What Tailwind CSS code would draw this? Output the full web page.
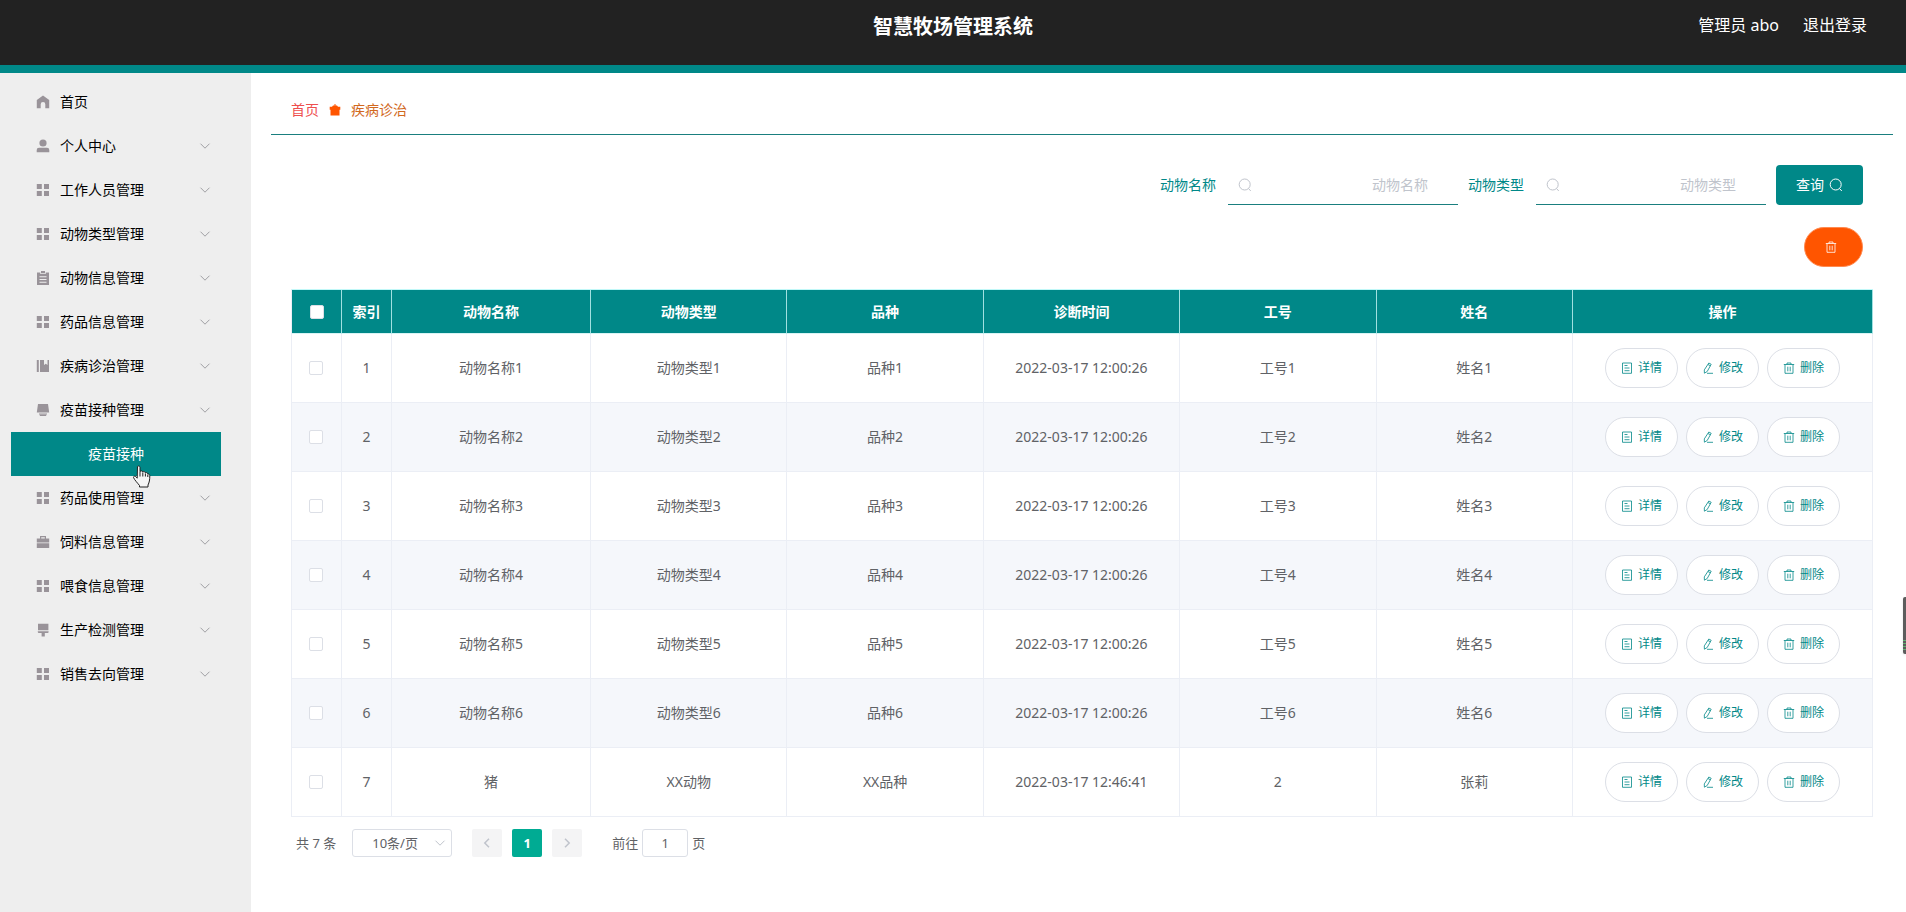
<!DOCTYPE html>
<html lang="zh-CN">

<head>
    <meta charset="utf-8">
    <meta name="viewport" content="width=device-width, initial-scale=1">
    <title>智慧牧场管理系统</title>
    <script src="https://cdn.jsdelivr.net/npm/@tailwindcss/browser@4"></script>
</head>

<body class="min-h-screen flex flex-col bg-white text-sm font-['Noto_Sans','Noto_Sans_CJK_SC',sans-serif]">

    <!-- Icon set -->
    <svg class="hidden" xmlns="http://www.w3.org/2000/svg">
        <symbol id="i-home" viewBox="0 0 14 14"><path d="M7 .6 13.2 5v8.200H9.300V9.200a2.300 2.300 0 0 0-4.600 0v4H.8V5z" fill="currentColor" /></symbol>
        <symbol id="i-user" viewBox="0 0 14 14"><circle cx="7" cy="4" r="3.600" fill="currentColor" /><path d="M.7 13.300v-2.300A2.300 2.300 0 0 1 3 8.700h8a2.300 2.300 0 0 1 2.300 2.300v2.300z" fill="currentColor" /></symbol>
        <symbol id="i-menu" viewBox="0 0 14 14"><path d="M.8 1h5v5h-5zM8 1h5v5H8zM.8 8h5v5h-5zM8 8h5v5H8z" fill="currentColor" /></symbol>
        <symbol id="i-order" viewBox="0 0 14 14"><path fill-rule="evenodd" d="M1 1.500h3.300V3h5.400V1.500H13V14H1zM3.500 5.200v1h7v-1zM3.500 8v1h7V8zM3.500 10.800v1h7v-1zM5 0h4v2.300H5z" fill="currentColor" /></symbol>
        <symbol id="i-mgmt" viewBox="0 0 14 14"><path d="M.8 1h2v12h-2zM4 1h4v5l1.800-1.300L11.500 6V1H13v12H4z" fill="currentColor" /></symbol>
        <symbol id="i-platform" viewBox="0 0 14 14"><path d="M2 1h10l1.200 8.500H.8zM3 10.500h8v1H3zM3.800 11.800h6.400V13H3.800z" fill="currentColor" /></symbol>
        <symbol id="i-case" viewBox="0 0 14 14"><path d="M4 3.500V1h6v2.500h3.200v4H.8v-4zM5.200 2.200v1.300h3.600V2.200zM.8 8.300h12.400V13H.8z" fill="currentColor" fill-rule="evenodd" /></symbol>
        <symbol id="i-brush" viewBox="0 0 14 14"><path d="M2 .8h10.400v6.400H2zM1.800 8.200h10.800v.8a1 1 0 0 1-1 1H8.800v3.500H5.600V10H2.800a1 1 0 0 1-1-1z" fill="currentColor" /></symbol>
        <symbol id="i-down" viewBox="0 0 12 12"><path d="m1.500 3.700 4.500 4.500 4.500-4.500" fill="none" stroke="currentColor" /></symbol>
        <symbol id="i-left" viewBox="0 0 12 12"><path d="M8 1.800 3.800 6 8 10.200" fill="none" stroke="currentColor" stroke-width="1.500" /></symbol>
        <symbol id="i-right" viewBox="0 0 12 12"><path d="M4 1.800 8.200 6 4 10.200" fill="none" stroke="currentColor" stroke-width="1.500" /></symbol>
        <symbol id="i-search" viewBox="0 0 14 14"><circle cx="6.700" cy="6.500" r="5.500" fill="none" stroke="currentColor" /><path d="m10.500 10.500 2.300 2.500" stroke="currentColor" /></symbol>
        <symbol id="i-trash" viewBox="0 0 12 12"><path d="M.8 2.500h10.400M4 2.500V1h4v1.500M2 2.500v8.800h8V2.500M4.800 4.700v4.600M7.200 4.700v4.600" fill="none" stroke="currentColor" stroke-width=".8" /></symbol>
        <symbol id="i-doc" viewBox="0 0 12 12"><path d="M1.500 1h9v10.300h-9zM3.500 3.500h3M3.500 6h5M3.500 8.700h5" fill="none" stroke="currentColor" stroke-width=".8" /></symbol>
        <symbol id="i-edit" viewBox="0 0 12 12"><path d="m6.800 1 2.400 1.300-4 7.200-2.800 1.700-.1-3.300zM6 2.500l2.400 1.300M5 11.300h6" fill="none" stroke="currentColor" stroke-width=".8" /></symbol>
        <symbol id="i-goods" viewBox="0 0 12 12"><path d="M5.500 0h1v1.500H8L9 2.700h2.300v3.100h-.8v5.700h-9V5.800H.7V2.700H3l1-1.200h1.500z" fill="currentColor" /></symbol>
    </svg>

    <header class="flex h-[73px] items-start border-b-8 border-[#008888] bg-[#222] px-[39px] pt-[13px] text-white">
        <div class="flex-1"></div>
        <h1 class="text-xl leading-7 font-bold">智慧牧场管理系统</h1>
        <div class="flex flex-1 justify-end gap-6 text-base leading-6">
            <span>管理员 abo</span>
            <a href="#">退出登录</a>
        </div>
    </header>

    <div class="flex flex-1">
        <aside class="w-[251px] shrink-0 bg-[#eee] pt-[7px] pr-[30px] pl-[11px]">
            <ul id="menu"></ul>
        </aside>

        <main class="min-w-0 flex-1 pr-[13px] pl-5">
            <nav class="flex h-[62px] items-center gap-[10px] border-b border-[#1a7f7f] px-5 pt-3">
                <a href="#" class="text-[#ee4f4f]">首页</a>
                <svg class="h-3 w-3 text-[#ff5500]"><use href="#i-goods" /></svg>
                <span class="text-[#d2691e]">疾病诊治</span>
            </nav>

            <div class="px-5 pt-[30px]">
                <form class="flex items-center justify-end pr-[10px] text-[#008888]">
                    <label for="name" class="mr-3">动物名称</label>
                    <div class="relative mr-[10px]">
                        <svg class="absolute top-[13px] left-[10px] h-[14px] w-[14px] text-[#c0c4cc]"><use href="#i-search" /></svg>
                        <input id="name" placeholder="动物名称" class="h-10 w-[230px] border-b border-[#1a7f7f] px-[30px] text-right outline-none placeholder:text-[#c0c4cc]">
                    </div>
                    <label for="type" class="mr-3">动物类型</label>
                    <div class="relative mr-[10px]">
                        <svg class="absolute top-[13px] left-[10px] h-[14px] w-[14px] text-[#c0c4cc]"><use href="#i-search" /></svg>
                        <input id="type" placeholder="动物类型" class="h-10 w-[230px] border-b border-[#1a7f7f] px-[30px] text-right outline-none placeholder:text-[#c0c4cc]">
                    </div>
                    <button type="button" class="flex h-10 items-center gap-[5px] rounded bg-[#008888] px-5 text-white">查询
                        <svg class="h-[14px] w-[14px]"><use href="#i-search" /></svg>
                    </button>
                </form>

                <div class="flex justify-end py-[22px] pr-[10px]">
                    <button type="button" aria-label="删除" class="flex h-10 items-center rounded-full border border-[#ff8a50] bg-[#ff5500] pr-[25px] pl-5 text-white">
                        <svg class="h-3 w-3"><use href="#i-trash" /></svg>
                    </button>
                </div>

                <table class="w-full table-fixed border-separate border-spacing-0 border-t border-l border-t-[#c0f8f8] border-l-[#ebeef5] text-center text-[#606266]">
                    <colgroup>
                        <col class="w-[50px]">
                        <col class="w-[50px]">
                        <col class="w-[199px]">
                        <col>
                        <col>
                        <col>
                        <col>
                        <col>
                        <col class="w-[300px]">
                    </colgroup>
                    <thead class="bg-[#008888] text-white">
                        <tr class="h-11 *:border-r *:border-b *:border-r-[#a0e0e0] *:border-b-[#d8f4f4]">
                            <th><input type="checkbox" aria-label="全选" class="mx-auto block h-[14px] w-[14px] appearance-none rounded-xs border border-[#dcdfe6] bg-white"></th>
                            <th>索引</th>
                            <th>动物名称</th>
                            <th>动物类型</th>
                            <th>品种</th>
                            <th>诊断时间</th>
                            <th>工号</th>
                            <th>姓名</th>
                            <th>操作</th>
                        </tr>
                    </thead>
                    <tbody id="rows"></tbody>
                </table>

                <div class="flex items-start pt-3 pl-[5px] text-[13px] leading-7 text-[#606266]">
                    <span class="mr-4">共 7 条</span>
                    <div class="relative mr-5">
                        <select aria-label="每页条数" class="block h-7 w-[100px] appearance-none rounded-[3px] border border-[#dcdfe6] pl-[19px] leading-6">
                            <option>10条/页</option>
                        </select>
                        <svg class="pointer-events-none absolute top-2 right-[6px] h-3 w-3 text-[#c0c4cc]"><use href="#i-down" /></svg>
                    </div>
                    <button type="button" aria-label="上一页" disabled class="mr-[10px] flex h-7 w-[30px] items-center justify-center rounded-xs bg-[#f4f4f5] text-[#c0c4cc]">
                        <svg class="h-3 w-3"><use href="#i-left" /></svg>
                    </button>
                    <button type="button" class="mr-[10px] h-7 w-[30px] rounded-xs bg-[#00ab93] font-bold text-white">1</button>
                    <button type="button" aria-label="下一页" disabled class="mr-[30px] flex h-7 w-[30px] items-center justify-center rounded-xs bg-[#f4f4f5] text-[#c0c4cc]">
                        <svg class="h-3 w-3"><use href="#i-right" /></svg>
                    </button>
                    <label for="page" class="mr-1">前往</label>
                    <input id="page" value="1" class="mr-1 h-7 w-[46px] rounded-[3px] border border-[#dcdfe6] text-center">
                    <span>页</span>
                </div>
            </div>
        </main>
    </div>

    <!-- Edge handle -->
    <div class="absolute top-[597px] right-0 flex h-[57px] w-[3px] flex-col justify-end rounded-l-xs bg-[#5c5c5c] pb-[2px] shadow">
        <div class="h-3 bg-[repeating-linear-gradient(#62b070_0_1px,#5c5c5c_1px_3px)]"></div>
    </div>

    <!-- Pointer -->
    <svg class="pointer-events-none absolute top-[465px] left-[132px] h-[23px] w-[19px]" viewBox="0 0 19 23">
        <path d="M5.500 1.500c1.200-1 2.500-.4 2.500 1v4c.8-1 2.600-.7 2.800.5 1-.8 2.400-.4 2.600.8 1.200-.7 2.400.2 2.400 1.200 1-.2 2 .4 2 1.700 0 4.500-.5 6.500-1.800 9.300V22H7.500v-1.500C6 18.500 2.500 15 1.500 12.500c0-1.500 1.700-1.800 2.500-.7l1.200 1.400z" fill="#f6f6f6" stroke="#222" stroke-linejoin="round" />
        <path d="M8 6.500v5M10.800 7.500v4M13.400 8.500v3M15.800 9.500v2.500" stroke="#222" />
    </svg>

    <script>
        const menu = [
            ['首页', 'home'],
            ['个人中心', 'user'],
            ['工作人员管理', 'menu'],
            ['动物类型管理', 'menu'],
            ['动物信息管理', 'order'],
            ['药品信息管理', 'menu'],
            ['疾病诊治管理', 'mgmt'],
            ['疫苗接种管理', 'platform', '疫苗接种'],
            ['药品使用管理', 'menu'],
            ['饲料信息管理', 'case'],
            ['喂食信息管理', 'menu'],
            ['生产检测管理', 'brush'],
            ['销售去向管理', 'menu'],
        ];

        document.getElementById('menu').innerHTML = menu.map(([title, icon, child], i) => `
            <li>
                <a href="#" class="flex h-11 items-center pr-[10px] pl-[25px] text-black">
                    <svg class="mr-[10px] h-[14px] w-[14px] text-[#999399]"><use href="#i-${icon}" /></svg>
                    <span class="flex-1">${title}</span>
                    ${i ? '<svg class="h-3 w-3 text-[#a0a0a4]"><use href="#i-down" /></svg>' : ''}
                </a>
                ${child ? `<a href="#" class="flex h-11 items-center justify-center bg-[#008888] text-white">${child}</a>` : ''}
            </li>`).join('');

        const rows = [];
        for (let i = 1; i <= 6; i++) {
            rows.push(['动物名称' + i, '动物类型' + i, '品种' + i, '2022-03-17 12:00:26', '工号' + i, '姓名' + i]);
        }
        rows.push(['猪', 'XX动物', 'XX品种', '2022-03-17 12:46:41', '2', '张莉']);

        const button = (icon, text) => `
            <button type="button" class="flex h-10 items-center gap-[5px] rounded-full border border-[#dcdfe6] bg-white px-[15px] text-xs text-[#008888]">
                <svg class="h-3 w-3"><use href="#i-${icon}" /></svg>${text}
            </button>`;

        document.getElementById('rows').innerHTML = rows.map((row, i) => `
            <tr class="h-[69px] even:bg-[#f5f7fb] *:border-r *:border-b *:border-[#ebeef5]">
                <td class="pr-[2px]"><input type="checkbox" aria-label="选择第${i + 1}行" class="mx-auto block h-[14px] w-[14px] appearance-none rounded-xs border border-[#dcdfe6] bg-white"></td>
                <td>${i + 1}</td>
                ${row.map(cell => `<td>${cell}</td>`).join('')}
                <td><div class="flex justify-center gap-2">${button('doc', '详情')}${button('edit', '修改')}${button('trash', '删除')}</div></td>
            </tr>`).join('');
    </script>
</body>

</html>
